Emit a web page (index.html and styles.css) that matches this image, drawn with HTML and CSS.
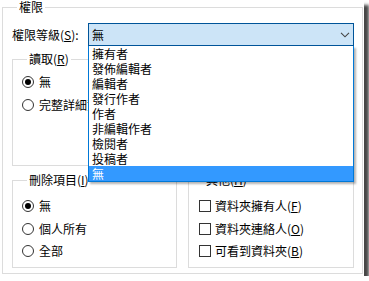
FILE: index.html
```html
<!DOCTYPE html>
<html lang="zh-Hant">
<head>
<meta charset="utf-8">
<title>權限</title>
<link rel="stylesheet" href="styles.css">
</head>
<body>
<div class="window">
  <fieldset class="group outer">
    <legend>權限</legend>
    <div class="level-row">
      <label class="level-label">權限等級(<u>S</u>):</label>
      <div class="combo">
        <div class="combo-box">
          <span class="combo-value">無</span>
          <svg class="chevron" width="10" height="6" viewBox="0 0 10 6"><path d="M1 0.8 L5 4.8 L9 0.8" fill="none" stroke="#444" stroke-width="1.1"/></svg>
        </div>
        <ul class="list">
          <li>擁有者</li>
          <li>發佈編輯者</li>
          <li>編輯者</li>
          <li>發行作者</li>
          <li>作者</li>
          <li>非編輯作者</li>
          <li>檢閱者</li>
          <li>投稿者</li>
          <li class="selected">無</li>
        </ul>
      </div>
    </div>
    <div class="columns">
      <fieldset class="group read">
        <legend>讀取(<u>R</u>)</legend>
        <div class="option"><span class="radio checked"></span>無</div>
        <div class="option"><span class="radio"></span>完整詳細資料</div>
      </fieldset>
      <fieldset class="group write"></fieldset>
      <fieldset class="group lower">
        <legend>刪除項目(<u>I</u>)</legend>
        <div class="option"><span class="radio checked"></span>無</div>
        <div class="option"><span class="radio"></span>個人所有</div>
        <div class="option"><span class="radio"></span>全部</div>
      </fieldset>
      <fieldset class="group lower other">
        <legend>其他(<u>H</u>)</legend>
        <div class="option"><span class="check"></span>資料夾擁有人(<u>F</u>)</div>
        <div class="option"><span class="check"></span>資料夾連絡人(<u>O</u>)</div>
        <div class="option"><span class="check"></span>可看到資料夾(<u>B</u>)</div>
      </fieldset>
    </div>
  </fieldset>
</div>
</body>
</html>
```
FILE: styles.css
```css
* { box-sizing: border-box; }

body {
  margin: 0;
  background: #fff;
  font-family: "Noto Sans CJK TC", "Noto Sans", sans-serif;
  font-size: 12px;
  color: #000;
}

.window {
  width: 364px;
  height: 276px;
  background: #fff;
  box-shadow: 5px 5px 3px rgba(0, 0, 0, 0.72);
}

u { text-decoration: underline; text-underline-offset: 1px; }

.group {
  margin: 0;
  min-width: 0;
  border: 1px solid #dcdcdc;
  padding: 0;
}

.group legend {
  margin-left: 5px;
  padding: 0 2px;
  line-height: 14px;
  height: 14px;
}

.outer {
  margin-left: 2px;
  width: 361px;
  height: 274px;
  padding: 9px 8px 5px 9px;
}

.level-row {
  display: flex;
  align-items: center;
  height: 23px;
}

.level-label {
  width: 76px;
  flex: none;
  line-height: 14px;
}

.combo {
  position: relative;
  width: 266px;
  height: 23px;
}

.combo-box {
  height: 23px;
  border: 1px solid #005499;
  background: #cce4f7;
  display: flex;
  align-items: center;
  justify-content: space-between;
  padding: 0 3px 0 3px;
  line-height: 14px;
}

.chevron { display: block; }

.list {
  position: absolute;
  z-index: 2;
  top: 100%;
  left: 0;
  width: 266px;
  margin: 0;
  padding: 0;
  list-style: none;
  background: #fff;
  border: 1px solid #0078d7;
  border-top: none;
  box-shadow: 2px 2px 2px rgba(0, 0, 0, 0.3);
}

.list li {
  height: 15px;
  line-height: 15px;
  padding-left: 3px;
  white-space: nowrap;
}

.list li.selected {
  background: #3399ff;
  color: #fff;
}

.columns {
  margin-top: 6px;
  display: grid;
  grid-template-columns: 165px 166px;
  grid-template-rows: 114px 95px;
  column-gap: 11px;
  row-gap: 7px;
}

.columns .group { height: 100%; }

.read { padding: 5px 0 0 9px; }
.read .option { width: 66px; }
.lower { padding: 8px 0 0 9px; }
.other { padding-left: 10px; }

.option {
  display: flex;
  align-items: center;
  height: 22.5px;
  line-height: 14px;
  white-space: nowrap;
  overflow: hidden;
}

.radio {
  flex: none;
  position: relative;
  width: 12px;
  height: 12px;
  border: 1px solid #333;
  border-radius: 50%;
  margin-right: 5px;
}

.radio.checked::after {
  content: "";
  position: absolute;
  left: 2px;
  top: 2px;
  width: 6px;
  height: 6px;
  border-radius: 50%;
  background: #000;
}

.check {
  flex: none;
  width: 12px;
  height: 12px;
  border: 1px solid #333;
  margin-right: 4px;
}
```
